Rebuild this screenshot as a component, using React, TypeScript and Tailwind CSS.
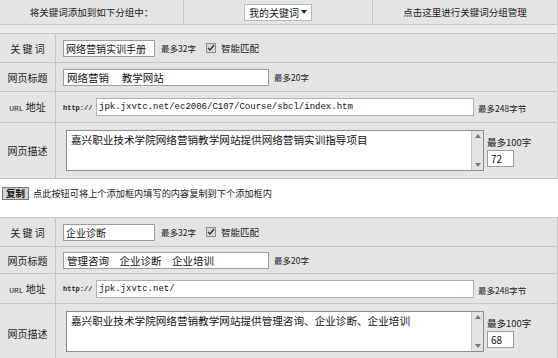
import React from 'react'

type Entry = {
    keyword: string
    title: string
    url: string
    desc: string
    count: string
    rows: [string, string, string, string]
}

const entries: Entry[] = [
    {
        keyword: '网络营销实训手册',
        title: '网络营销　 教学网站',
        url: 'jpk.jxvtc.net/ec2006/C107/Course/sbcl/index.htm',
        desc: '嘉兴职业技术学院网络营销教学网站提供网络营销实训指导项目',
        count: '72',
        rows: ['h-[29px]', 'h-[29px]', 'h-[31px]', 'h-[56px]'],
    },
    {
        keyword: '企业诊断',
        title: '管理咨询　企业诊断　企业培训',
        url: 'jpk.jxvtc.net/',
        desc: '嘉兴职业技术学院网络营销教学网站提供管理咨询、企业诊断、企业培训',
        count: '68',
        rows: ['h-[29px]', 'h-[27px]', 'h-[30px]', 'h-[60px]'],
    },
]

const Row = ({ label, h, children }: { label: React.ReactNode; h: string; children: React.ReactNode }) => (
    <div className={`flex border-b border-[#c4c4c4] ${h}`}>
        <div className="w-[56px] shrink-0 border-r border-[#c4c4c4] flex items-center justify-center text-[10px] text-[#222]">
            {label}
        </div>
        <div className="flex-1 flex items-center pl-[7px]">{children}</div>
    </div>
)

const Check = () => (
    <span className="ml-[10px] w-[10px] h-[10px] border border-[#8a8a8a] bg-[#d8d8d8] flex items-center justify-center">
        <svg width="8" height="8" viewBox="0 0 8 8">
            <path d="M1 4 L3 6 L7 1" stroke="#333" strokeWidth="1.4" fill="none" />
        </svg>
    </span>
)

const Form = ({ e }: { e: Entry }) => (
    <div>
        <Row label="关 键 词" h={e.rows[0]}>
            <input
                readOnly
                value={e.keyword}
                className="w-[92px] h-[17px] bg-white border border-[#9c9c9c] px-[2px] text-[10px] text-[#111] outline-none"
            />
            <span className="ml-[6px] text-[8.5px] text-[#222]">最多32字</span>
            <Check />
            <span className="ml-[5px] text-[9.5px] text-[#222]">智能匹配</span>
        </Row>
        <Row label="网页标题" h={e.rows[1]}>
            <input
                readOnly
                value={e.title}
                className="w-[206px] h-[17px] bg-white border border-[#9c9c9c] px-[3px] text-[10.5px] text-[#111] outline-none"
            />
            <span className="ml-[5px] text-[8.5px] text-[#222]">最多20字</span>
        </Row>
        <Row label={<span><span className="font-['Liberation_Mono',monospace] text-[8px]">URL</span> 地址</span>} h={e.rows[2]}>
            <span className="font-['Liberation_Mono',monospace] text-[7px] font-bold text-[#222] mt-[2px] w-[33px]">http://</span>
            <input
                readOnly
                value={e.url}
                className="w-[378px] h-[18px] bg-white border border-[#b0b0b0] px-[2px] font-['Liberation_Mono',monospace] text-[9px] text-[#111] outline-none"
            />
            <span className="ml-[4px] text-[8.5px] text-[#222] mt-[3px]">最多248字节</span>
        </Row>
        <Row label="网页描述" h={e.rows[3]}>
            <div className="self-start mt-[7px] ml-[3px] w-[418px] h-[41px] bg-white border border-[#8c8c8c] flex">
                <div className="flex-1 px-[4px] pt-[2px] text-[10.6px] leading-[14px] text-[#111]">{e.desc}</div>
                <div className="w-[12px] bg-[#e4e4e4] border-l border-[#c8c8c8] flex flex-col justify-between items-center py-[3px]">
                    <svg width="6" height="4" viewBox="0 0 6 4"><path d="M0 4 L3 0 L6 4Z" fill="#777" /></svg>
                    <svg width="6" height="4" viewBox="0 0 6 4"><path d="M0 0 L3 4 L6 0Z" fill="#777" /></svg>
                </div>
            </div>
            <div className="self-start mt-[13px] ml-[3px] flex flex-col">
                <span className="text-[9.5px] text-[#222] leading-[12px]">最多100字</span>
                <input
                    readOnly
                    value={e.count}
                    className="mt-[2px] w-[27px] h-[17px] bg-white border border-[#9c9c9c] px-[3px] text-[10px] text-[#111] outline-none"
                />
            </div>
        </Row>
    </div>
)

export default function App() {
    return (
        <div className="w-[558px] h-[358px] overflow-hidden bg-white font-['Noto_Sans_CJK_SC',sans-serif]">
            <div className="bg-[#e4e4e4] border-r border-[#cfcfcf]">
                <div className="flex h-[25px] border-b border-[#c4c4c4] text-[9.5px] text-[#222]">
                    <div className="w-[184px] border-r border-[#c4c4c4] flex items-center justify-center">
                        将关键词添加到如下分组中：
                    </div>
                    <div className="w-[189px] border-r border-[#c4c4c4] flex items-center justify-center">
                        <div className="h-[17px] w-[68px] bg-white border border-[#b8b8b8] flex items-center justify-between px-[4px] text-[10px]">
                            我的关键词
                            <svg width="6" height="4" viewBox="0 0 6 4"><path d="M0 0 L3 4 L6 0Z" fill="#222" /></svg>
                        </div>
                    </div>
                    <div className="flex-1 flex items-center justify-center">点击这里进行关键词分组管理</div>
                </div>
                <div className="h-[9px] border-b border-[#c4c4c4] bg-[#ececec]" />
                <Form e={entries[0]} />
            </div>

            <div className="h-[38px] flex items-start pt-[8px] pl-[2px]">
                <button className="h-[13px] px-[3px] border border-[#777] bg-[#d4d4d4] text-[9.5px] leading-[11px] font-bold text-[#111]">
                    复制
                </button>
                <span className="ml-[4px] text-[9.2px] text-[#222] leading-[13px]">
                    点此按钮可将上个添加框内填写的内容复制到下个添加框内
                </span>
            </div>

            <div className="bg-[#e4e4e4] border-t border-r border-[#c4c4c4]">
                <Form e={entries[1]} />
            </div>
        </div>
    )
}
